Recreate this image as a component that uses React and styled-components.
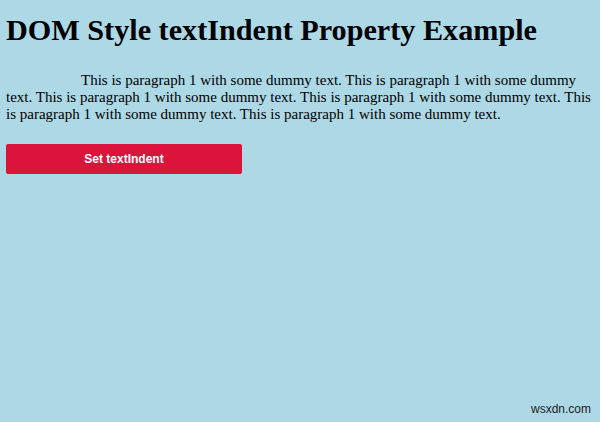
import React from "react";
import styled, { createGlobalStyle } from "styled-components";

const Global = createGlobalStyle`
  html, body { margin: 0; padding: 0; background: #add8e6; }
  body { font-family: "Liberation Serif", "Times New Roman", serif; color: #000; }
  #root { min-height: 422px; }
`;

const Page = styled.div`
  position: relative;
  min-height: 422px;
  padding: 0 2px 0 6px;
  box-sizing: border-box;
`;

const Heading = styled.h1`
  margin: 0;
  padding-top: 12px;
  font-size: 30.2px;
  font-weight: bold;
  line-height: 36px;
`;

const Paragraph = styled.p`
  margin: 24px 0 0;
  font-size: 15px;
  line-height: 17px;
  text-indent: 75px;
`;

const Button = styled.button`
  display: block;
  margin-top: 21px;
  width: 236px;
  height: 30px;
  border: none;
  border-radius: 2px;
  background: #dc143c;
  color: #fff;
  font-family: "Liberation Sans", Arial, sans-serif;
  font-weight: bold;
  font-size: 12px;
  cursor: pointer;
`;

const Watermark = styled.div`
  position: absolute;
  right: 9px;
  bottom: 6px;
  font-family: "Liberation Sans", Arial, sans-serif;
  font-size: 12px;
  color: #222;
`;

export default function App() {
  return (
    <>
      <Global />
      <Page>
        <Heading>DOM Style textIndent Property Example</Heading>
        <Paragraph>
          This is paragraph 1 with some dummy text. This is paragraph 1 with some dummy text. This is paragraph 1 with some dummy text. This is paragraph 1 with some dummy text. This is paragraph 1 with some dummy text. This is paragraph 1 with some dummy text.
        </Paragraph>
        <Button>Set textIndent</Button>
        <Watermark>wsxdn.com</Watermark>
      </Page>
    </>
  );
}
